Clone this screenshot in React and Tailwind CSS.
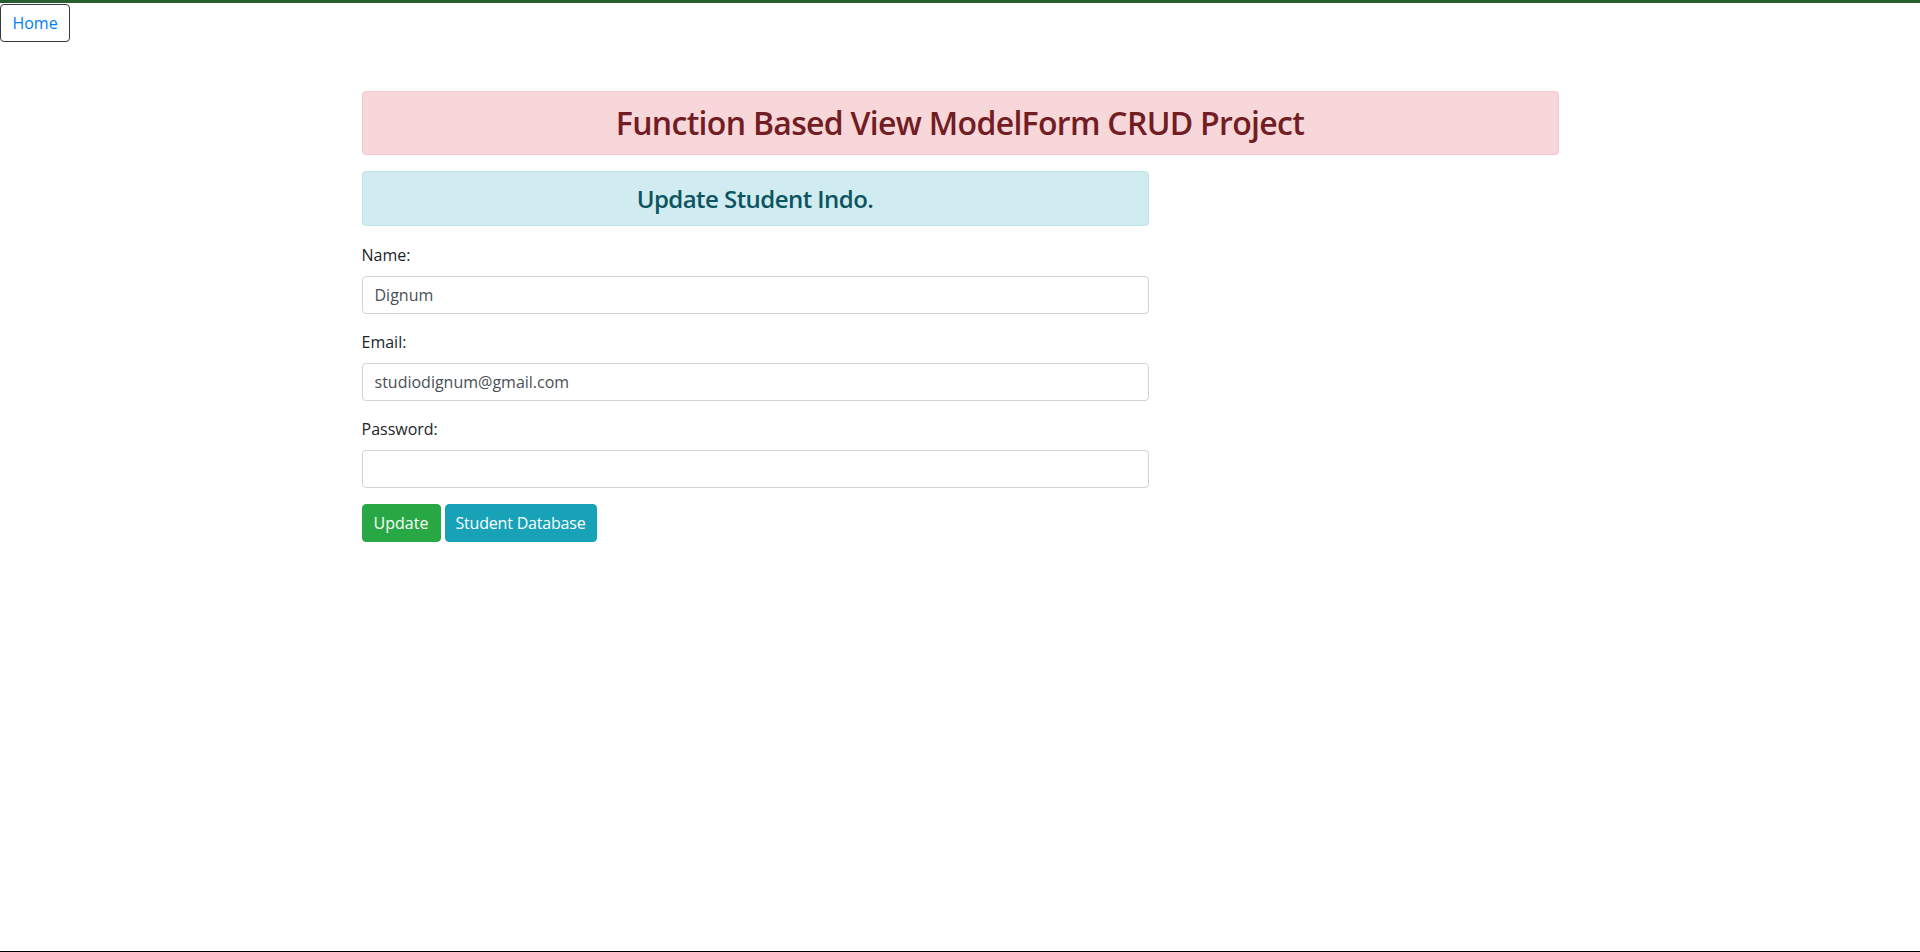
import React, { useState } from "react";

const font = { fontFamily: '"Segoe UI", "Open Sans", "Noto Sans", sans-serif' };

const Field = ({ label, type = "text", value, onChange }) => (
  <div className="mb-4">
    <label className="block mb-[9px] text-base leading-6 text-[#212529]">{label}</label>
    <input
      type={type}
      value={value}
      onChange={(e) => onChange(e.target.value)}
      className="block w-full h-[38px] px-3 py-1.5 text-base leading-6 text-[#495057] bg-white border border-[#ced4da] rounded outline-none"
    />
  </div>
);

const App = () => {
  const [name, setName] = useState("Dignum");
  const [email, setEmail] = useState("studiodignum@gmail.com");
  const [password, setPassword] = useState("");

  return (
    <div className="h-[952px] flex flex-col bg-white border-b border-black" style={font}>
      <div className="h-[3px] bg-[#2b5e2f]"></div>
      <div className="mt-px">
        <a
          href="#"
          className="inline-block w-[70px] h-[38px] py-1.5 text-center text-base leading-6 text-[#007bff] border border-[#343a40] rounded"
        >
          Home
        </a>
      </div>

      <div className="w-[1197px] mx-auto mt-[49px]">
        <h2 className="mb-4 px-5 py-3 text-[32px] leading-[38px] font-semibold tracking-[-0.7px] text-center text-[#721c24] bg-[#f8d7da] border border-[#f5c6cb] rounded">
          Function Based View ModelForm CRUD Project
        </h2>

        <div className="w-[787px]">
          <h4 className="mb-[17px] px-5 py-3 text-2xl leading-[29px] font-semibold tracking-[-0.55px] text-center text-[#0c5460] bg-[#d1ecf1] border border-[#bee5eb] rounded">
            Update Student Indo.
          </h4>

          <form onSubmit={(e) => e.preventDefault()}>
            <Field label="Name:" value={name} onChange={setName} />
            <Field label="Email:" type="email" value={email} onChange={setEmail} />
            <Field label="Password:" type="password" value={password} onChange={setPassword} />

            <div className="flex gap-[4px]">
              <button
                type="submit"
                className="w-[79px] h-[38px] py-1.5 text-center text-base leading-6 text-white bg-[#28a745] border border-[#28a745] rounded"
              >
                Update
              </button>
              <a
                href="#"
                className="inline-block w-[152px] h-[38px] py-1.5 text-center whitespace-nowrap text-base leading-6 tracking-[-0.2px] text-white bg-[#17a2b8] border border-[#17a2b8] rounded"
              >
                Student Database
              </a>
            </div>
          </form>
        </div>
      </div>
    </div>
  );
};

export default App;
